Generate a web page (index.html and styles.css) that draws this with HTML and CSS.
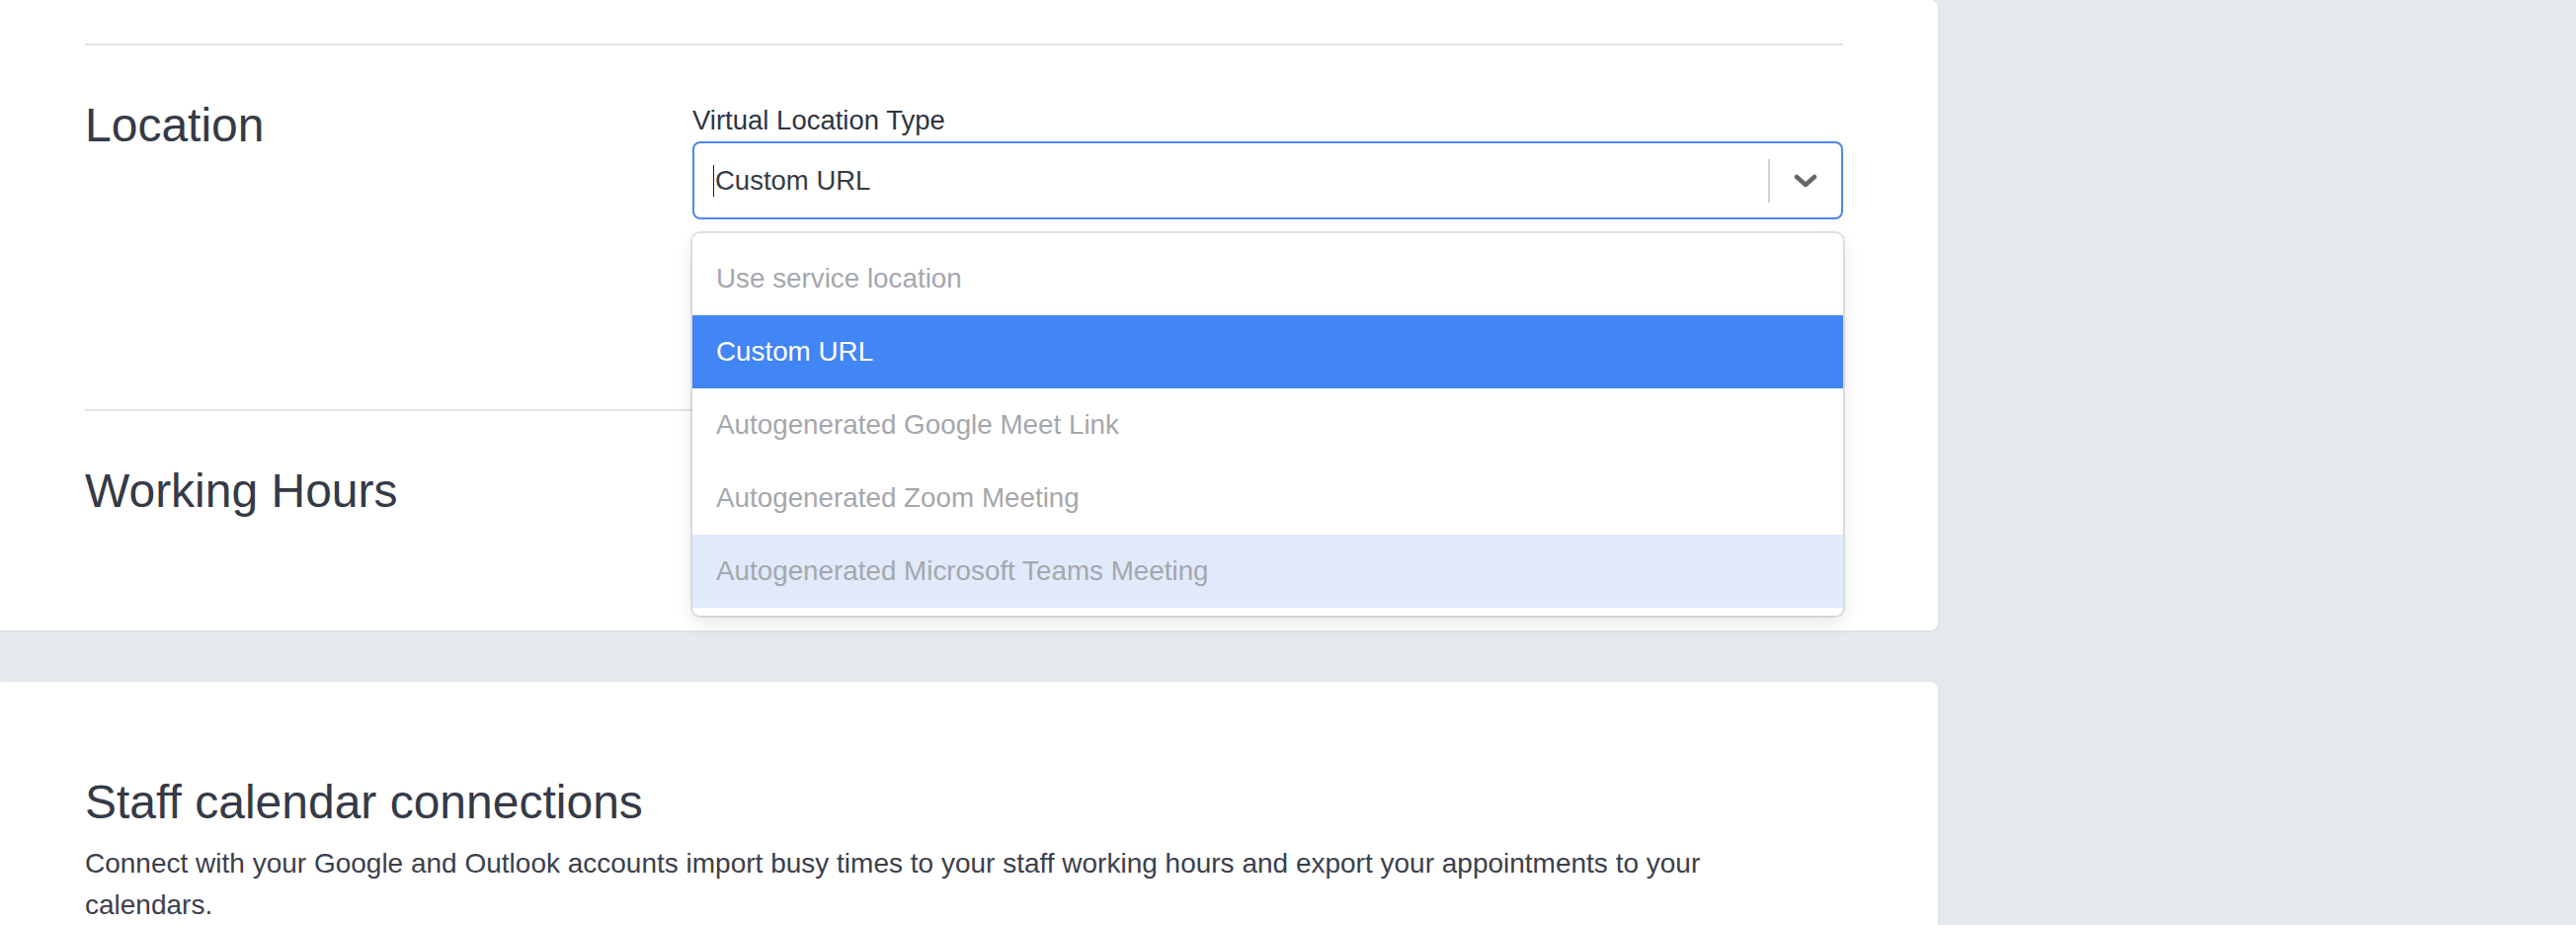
FILE: index.html
```html
<!DOCTYPE html>
<html lang="en">
<head>
    <meta charset="UTF-8">
    <meta name="viewport" content="width=device-width, initial-scale=1.0">
    <title>Staff settings</title>
    <link rel="stylesheet" href="styles.css">
</head>
<body>
    <div class="page">
        <div class="main">
            <div class="card card-settings">
                <div class="row row-location">
                    <h2 class="row-title">Location</h2>
                    <div class="field-col">
                        <label class="field-label" for="virtualType">Virtual Location Type</label>
                        <div class="select">
                            <div class="control is-focused" id="virtualType">
                                <div class="control-value"><span class="caret"></span>Custom URL</div>
                                <span class="indicator-sep"></span>
                                <span class="indicator">
                                    <svg width="24" height="14" viewBox="0 0 24 14"><path d="M3 3 L12 11 L21 3" fill="none" stroke="#666" stroke-width="4.5" stroke-linecap="round" stroke-linejoin="round"/></svg>
                                </span>
                            </div>
                            <div class="menu">
                                <div class="option">Use service location</div>
                                <div class="option is-selected">Custom URL</div>
                                <div class="option">Autogenerated Google Meet Link</div>
                                <div class="option">Autogenerated Zoom Meeting</div>
                                <div class="option is-focused">Autogenerated Microsoft Teams Meeting</div>
                            </div>
                        </div>
                        <!-- url input, sits under the open menu -->
                        <div class="control control-plain control-under"></div>
                    </div>
                </div>
                <div class="row row-hours">
                    <h2 class="row-title">Working Hours</h2>
                    <div class="field-col field-col-hours">
                        <div class="control control-plain"></div>
                    </div>
                </div>
            </div>

            <div class="card card-calendar">
                <h2 class="section-title">Staff calendar connections</h2>
                <p class="section-text">Connect with your Google and Outlook accounts import busy times to your staff working hours and export your appointments to your calendars.</p>
            </div>
        </div>
        <div class="side"></div>
    </div>
</body>
</html>
```

FILE: styles.css
```css
body {
    font-family: "Liberation Sans", Arial, sans-serif;
    margin: 0;
    padding: 0;
    background-color: #e6e9ec;
    color: #353a47;
    overflow: hidden;
}

.page {
    display: flex;
    height: 936px;
}

.main {
    width: 1962px;
    flex-shrink: 0;
}

.side {
    flex: 1;
}

.card {
    background-color: #fff;
    border-radius: 0 8px 8px 0;
    box-shadow: 0 1px 3px rgba(0, 0, 0, 0.07);
    padding: 0 96px 0 86px;
}

.card-settings {
    padding-top: 44px;
    padding-bottom: 84px;
}

.row {
    display: grid;
    grid-template-columns: 615px 1fr;
    border-top: 2px solid #e4e4e4;
    padding-top: 53px;
}

.row-location {
    padding-bottom: 60px;
}

.row-title {
    margin: 0;
    font-size: 48px;
    font-weight: normal;
    line-height: 56px;
    color: #353a47;
}

.field-col {
    display: flex;
    flex-direction: column;
    padding-top: 7px;
}

.field-col-hours {
    padding-top: 6px;
}

.field-label {
    display: block;
    font-size: 27.5px;
    line-height: 32px;
    color: #2f3441;
    margin-bottom: 5px;
}

.select {
    position: relative;
}

.control {
    display: flex;
    align-items: center;
    height: 79px;
    box-sizing: border-box;
    border: 2px solid #ccc;
    border-radius: 8px;
    background-color: #fff;
}

.control.is-focused {
    border-color: #4a89f3;
}

.control-under {
    margin-top: 53px;
}

.control-value {
    flex: 1;
    display: flex;
    align-items: center;
    padding-left: 19px;
    font-size: 27.5px;
    line-height: 32px;
    color: #383c44;
}

.caret {
    width: 1px;
    height: 32px;
    background-color: #222;
    margin-right: 1px;
}

.indicator-sep {
    width: 2px;
    height: 44px;
    background-color: #cfcfcf;
}

.indicator {
    width: 72px;
    display: flex;
    justify-content: center;
    align-items: center;
}

.menu {
    position: absolute;
    top: calc(100% + 14px);
    left: 0;
    right: 0;
    z-index: 2;
    background-color: #fff;
    border-radius: 8px;
    padding: 9px 0 8px 0;
    box-shadow: 0 0 0 2px rgba(0, 0, 0, 0.1), 0 7px 18px rgba(0, 0, 0, 0.1);
}

.option {
    height: 74px;
    line-height: 74px;
    padding: 0 24px;
    font-size: 27.8px;
    color: #a5a7ad;
}

.option.is-selected {
    background-color: #4285f4;
    color: #fff;
}

.option.is-focused {
    background-color: #e0eafb;
}

.card-calendar {
    margin-top: 52px;
    padding-top: 94px;
    border-radius: 0 8px 0 0;
    height: 400px;
}

.section-title {
    margin: 0;
    font-size: 48px;
    font-weight: normal;
    line-height: 56px;
    color: #353a47;
}

.section-text {
    max-width: 1740px;
    margin: 13px 0 0 0;
    font-size: 28px;
    line-height: 42px;
    color: #3b404c;
}
```
